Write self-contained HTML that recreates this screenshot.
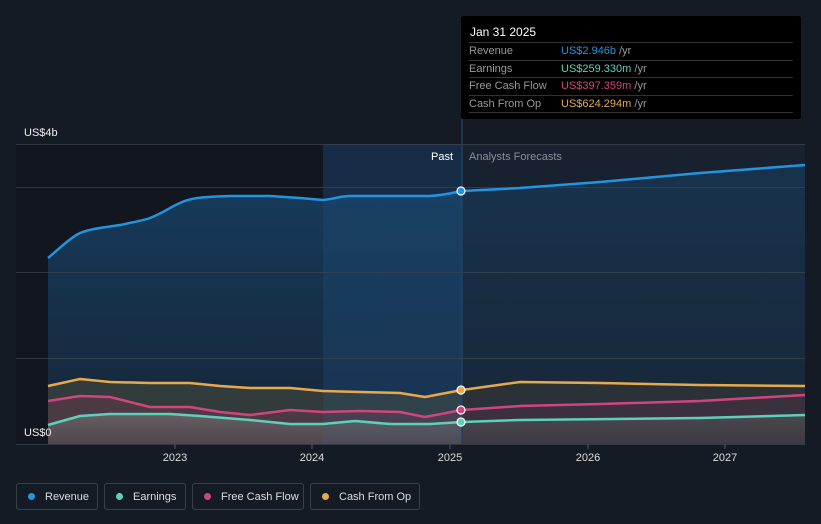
<!DOCTYPE html><html><head><style>
body{margin:0;width:821px;height:524px;background:#151b25;font-family:"Liberation Sans",sans-serif;overflow:hidden;position:relative}
.tt{position:absolute;left:461px;top:16px;width:340px;height:103px;background:#000;border-radius:2px;font-size:11px;color:#999}
.tt .h{color:#fff;font-size:12px;padding:9px 0 0 9px;height:17px}
.tt .r{margin:0 8px;border-top:1px solid #333;height:16.5px;line-height:16.5px;position:relative}
.tt .r span{position:absolute;left:92px}
.lg{position:absolute;top:483px;height:27px;border:1px solid #3a404a;border-radius:3px;font-size:11px;color:#ddd;line-height:27px;box-sizing:border-box}
.lg i{display:inline-block;width:7px;height:7px;border-radius:50%;margin:0 10px 0 11px;vertical-align:0}
</style></head><body>
<svg width="821" height="524" style="position:absolute;left:0;top:0">
<defs>
<linearGradient id="rg" x1="0" y1="0" x2="0" y2="1"><stop offset="0" stop-color="#174166" stop-opacity=".9"/><stop offset="1" stop-color="#183149" stop-opacity=".6"/></linearGradient>
<linearGradient id="gg" x1="0" y1="0" x2="0" y2="1"><stop offset="0" stop-color="#777" stop-opacity=".6"/><stop offset="1" stop-color="#555" stop-opacity=".5"/></linearGradient>
</defs>
<rect x="16" y="144" width="307" height="300" fill="#12161e"/>
<rect x="323" y="144" width="139" height="300" fill="#14243a"/>
<rect x="462" y="144" width="343" height="300" fill="#182232"/>
<path d="M48,258 C60,248 70,238 80,233 C90,229 100,228 120,225 C135,222 145,220 150,218 C165,212 172,206 180,203 C190,198 200,197 230,196 L270,196 L300,198 L323,200 C335,199 340,196 350,196 L430,196 C445,195 452,193 462,191 L520,188 L600,182 L700,173 L805,165 L805,444 L48,444Z" fill="url(#rg)"/>
<path d="M48,386 L80,379 L110,382 L150,383 L190,383 L220,386 L250,388 L290,388 L323,391 L360,392 L400,393 L425,397 L462,390 L520,382 L600,383 L700,385 L805,386 L805,444 L48,444Z" fill="#4a4a3a" opacity=".55"/>
<path d="M48,401 L80,396 L110,397 L150,407 L190,407 L220,412 L250,415 L290,410 L323,412 L360,411 L400,412 L425,417 L462,410 L520,406 L600,404 L700,401 L805,395 L805,444 L48,444Z" fill="#6a3a50" opacity=".45"/>
<path d="M48,425 L80,416 L110,414 L170,414 L200,416 L250,420 L290,424 L323,424 L355,421 L390,424 L430,424 L462,422 L520,420 L700,418 L805,415 L805,444 L48,444Z" fill="url(#gg)"/>
<rect x="323" y="144" width="139" height="300" fill="#2a6aa8" opacity=".12"/>
<rect x="462" y="144" width="343" height="300" fill="#1a202b" opacity=".35"/>
<g stroke="#3a414c" stroke-width="1" opacity=".8"><line x1="16" y1="144.5" x2="805" y2="144.5"/><line x1="16" y1="187.5" x2="805" y2="187.5"/><line x1="16" y1="272.5" x2="805" y2="272.5"/><line x1="16" y1="358.5" x2="805" y2="358.5"/><line x1="16" y1="444.5" x2="805" y2="444.5"/></g>
<line x1="462" y1="16" x2="462" y2="444" stroke="#1f4266" stroke-width="1.5"/>
<g fill="none" stroke-width="2.5" stroke-linejoin="round">
<path d="M48,258 C60,248 70,238 80,233 C90,229 100,228 120,225 C135,222 145,220 150,218 C165,212 172,206 180,203 C190,198 200,197 230,196 L270,196 L300,198 L323,200 C335,199 340,196 350,196 L430,196 C445,195 452,193 462,191 L520,188 L600,182 L700,173 L805,165" stroke="#2394e0"/>
<path d="M48,386 L80,379 L110,382 L150,383 L190,383 L220,386 L250,388 L290,388 L323,391 L360,392 L400,393 L425,397 L462,390 L520,382 L600,383 L700,385 L805,386" stroke="#e8a94e"/>
<path d="M48,401 L80,396 L110,397 L150,407 L190,407 L220,412 L250,415 L290,410 L323,412 L360,411 L400,412 L425,417 L462,410 L520,406 L600,404 L700,401 L805,395" stroke="#d0457e"/>
<path d="M48,425 L80,416 L110,414 L170,414 L200,416 L250,420 L290,424 L323,424 L355,421 L390,424 L430,424 L462,422 L520,420 L700,418 L805,415" stroke="#5ed0b8"/>
</g>
<g stroke="#fff" stroke-width="1.2"><circle cx="461" cy="191" r="4" fill="#2394e0"/><circle cx="461" cy="390" r="4" fill="#e8a94e"/><circle cx="461" cy="410" r="4" fill="#d0457e"/><circle cx="461" cy="422" r="4" fill="#5ed0b8"/></g>
<g stroke="#555" stroke-width="1"><line x1="175" y1="444" x2="175" y2="449"/><line x1="312" y1="444" x2="312" y2="449"/><line x1="450" y1="444" x2="450" y2="449"/><line x1="588" y1="444" x2="588" y2="449"/><line x1="725" y1="444" x2="725" y2="449"/></g>
<g font-size="11" fill="#ddd" font-family="Liberation Sans,sans-serif" text-anchor="middle"><text x="175" y="461">2023</text><text x="312" y="461">2024</text><text x="450" y="461">2025</text><text x="588" y="461">2026</text><text x="725" y="461">2027</text></g>
<text x="24" y="136" font-size="11" fill="#eee">US$4b</text>
<text x="24" y="436" font-size="11" fill="#eee">US$0</text>
<text x="453" y="160" font-size="11" fill="#fff" text-anchor="end">Past</text>
<text x="469" y="160" font-size="11" fill="#8a8f96">Analysts Forecasts</text>
</svg>
<div class="tt"><div class="h">Jan 31 2025</div>
<div class="r">Revenue<span><b style="font-weight:normal;color:#2394e0">US$2.946b</b> /yr</span></div>
<div class="r">Earnings<span><b style="font-weight:normal;color:#5ed0b8">US$259.330m</b> /yr</span></div>
<div class="r">Free Cash Flow<span><b style="font-weight:normal;color:#d0457e">US$397.359m</b> /yr</span></div>
<div class="r">Cash From Op<span><b style="font-weight:normal;color:#e8a94e">US$624.294m</b> /yr</span></div>
<div class="r"></div></div>
<div class="lg" style="left:16px;width:82px"><i style="background:#2394e0"></i>Revenue</div>
<div class="lg" style="left:104px;width:82px"><i style="background:#5ed0b8"></i>Earnings</div>
<div class="lg" style="left:192px;width:112px"><i style="background:#d0457e"></i>Free Cash Flow</div>
<div class="lg" style="left:310px;width:110px"><i style="background:#e8a94e"></i>Cash From Op</div>
</body></html>
